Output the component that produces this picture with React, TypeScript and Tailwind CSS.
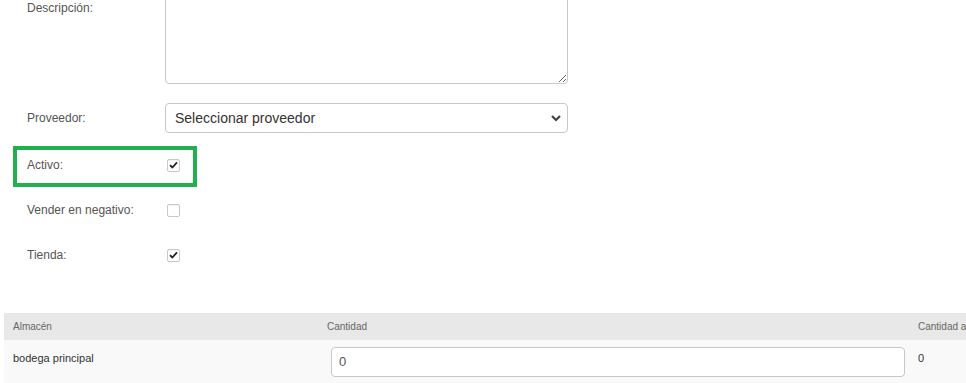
import React from 'react';

const Check: React.FC<{ on?: boolean }> = ({ on }) => (
  <span className="w-[13px] h-[13px] rounded-[2px] border border-[#c9c9c9] bg-white flex items-center justify-center shadow-[inset_0_1px_1px_rgba(0,0,0,0.06)]">
    {on && (
      <svg width="9" height="8" viewBox="0 0 9 8">
        <path d="M1 4.2 L3.4 6.5 L8 1.3" fill="none" stroke="#222" strokeWidth="1.8" strokeLinejoin="round" />
      </svg>
    )}
  </span>
);

const App: React.FC = () => {
  return (
    <div className="w-[966px] h-[383px] overflow-hidden bg-white font-['Liberation_Sans',Arial,sans-serif] relative">
      {/* Form */}
      <div className="flex flex-col -mt-[3px]">
        <div className="flex h-[87px]">
          <label className="w-[165px] pl-[27px] pt-[3px] text-[12px] leading-[16px] text-[#555]">Descripción:</label>
          <textarea className="w-[403px] h-[87px] border border-[#c8c8c8] rounded-[4px] outline-none" />
        </div>

        <div className="flex items-center h-[30px] mt-[19px]">
          <label className="w-[165px] pl-[27px] text-[12px] text-[#555]">Proveedor:</label>
          <div className="w-[403px] h-[30px] border border-[#c8c8c8] rounded-[4px] flex items-center justify-between pl-[9px] pr-[4px]">
            <span className="text-[14px] text-[#333]">Seleccionar proveedor</span>
            <svg width="14" height="14" viewBox="0 0 14 14">
              <path d="M3 5 L7 9 L11 5" fill="none" stroke="#444" strokeWidth="2.2" />
            </svg>
          </div>
        </div>

        <div className="relative flex items-center h-[30px] mt-[17px]">
          <label className="w-[167px] pl-[27px] text-[12px] text-[#555]">Activo:</label>
          <Check on />
          <div className="absolute left-[13px] top-[-4px] w-[184px] h-[41px] border-[4px] border-[#21b04b] pointer-events-none" />
        </div>

        <div className="flex items-center h-[30px] mt-[15px]">
          <label className="w-[167px] pl-[27px] text-[12px] text-[#555]">Vender en negativo:</label>
          <Check />
        </div>

        <div className="flex items-center h-[30px] mt-[15px]">
          <label className="w-[167px] pl-[27px] text-[12px] text-[#555]">Tienda:</label>
          <Check on />
        </div>
      </div>

      {/* Table */}
      <div className="ml-[4px] mt-[43px] w-[1100px]">
        <div className="flex h-[27px] items-center bg-[#e8e8e8] text-[10px] text-[#666]">
          <div className="w-[314px] pl-[9px]">Almacén</div>
          <div className="w-[591px] pl-[9px]">Cantidad</div>
          <div className="pl-[9px]">Cantidad actual</div>
        </div>
        <div className="flex h-[44px] bg-[#f9f9f9] text-[11px] text-[#333]">
          <div className="w-[314px] pl-[9px] pt-[10px]">bodega principal</div>
          <div className="w-[591px] pl-[13px] pt-[7px] pr-[4px]">
            <div className="h-[30px] border border-[#c8c8c8] rounded-[4px] bg-white flex items-center pl-[7px] text-[13px] text-[#555]">0</div>
          </div>
          <div className="pl-[9px] pt-[10px]">0</div>
        </div>
      </div>
    </div>
  );
};

export default App;
